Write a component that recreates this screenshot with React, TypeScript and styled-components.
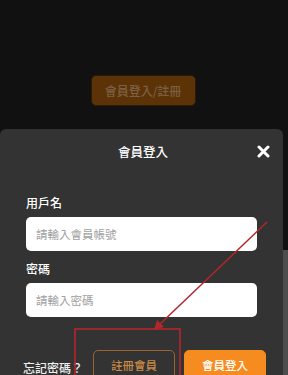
import React from 'react';
import styled, { createGlobalStyle } from 'styled-components';

const GlobalStyle = createGlobalStyle`
  html, body {
    margin: 0;
    padding: 0;
    background: #111111;
    overflow: hidden;
  }
  * {
    box-sizing: border-box;
  }
`;

const colors = {
  page: '#111111',
  modal: '#333333',
  orange: '#f68b1f',
  annotation: '#b3262b',
};

const App = () => {
  return (
    <StPage>
      <GlobalStyle />
      <StMain>
        <StBackdrop>
          <StDimButton>會員登入/註冊</StDimButton>
        </StBackdrop>
        <StModal>
          <StModalHeader>
            <StModalTitle>會員登入</StModalTitle>
            <StCloseButton aria-label='close'>
              <svg width='13' height='13' viewBox='0 0 13 13'>
                <path d='M2 2 L11 11 M11 2 L2 11' stroke='#fff' strokeWidth='3' strokeLinecap='round' />
              </svg>
            </StCloseButton>
          </StModalHeader>
          <StField $top={36}>
            <StLabel>用戶名</StLabel>
            <StInput placeholder='請輸入會員帳號' />
          </StField>
          <StField $top={11}>
            <StLabel>密碼</StLabel>
            <StInput type='password' placeholder='請輸入密碼' />
          </StField>
          <StActions>
            <StForgot>忘記密碼？</StForgot>
            <StButton $variant='outline'>註冊會員</StButton>
            <StButton $variant='solid'>會員登入</StButton>
          </StActions>
        </StModal>
      </StMain>
      <StScrollTrack>
        <StScrollThumb />
      </StScrollTrack>
      {/* red annotation drawn over the screenshot */}
      <StAnnotation width='288' height='375' viewBox='0 0 288 375'>
        <rect x='75' y='329' width='105' height='60' fill='none' stroke={colors.annotation} strokeWidth='1.6' />
        <line x1='267' y1='222' x2='158' y2='326' stroke={colors.annotation} strokeWidth='1.5' />
        <polygon points='154,330 157,320 164,327' fill={colors.annotation} />
      </StAnnotation>
    </StPage>
  );
};

const StPage = styled.div`
  position: relative;
  width: 288px;
  height: 375px;
  display: flex;
  overflow: hidden;
  background: ${colors.page};
  font-family: 'Noto Sans CJK TC', 'Noto Sans', sans-serif;
`;

const StMain = styled.div`
  width: 283px;
  display: flex;
  flex-direction: column;
`;

const StBackdrop = styled.div`
  height: 129px;
  flex-shrink: 0;
  display: flex;
  justify-content: center;
  padding: 75px 0 0 3px;
`;

const StDimButton = styled.div`
  width: 105px;
  height: 31px;
  border-radius: 5px;
  background: #5c3306;
  border: 1px solid #2a1a08;
  color: #7d5f45;
  font-size: 12px;
  font-weight: 500;
  display: flex;
  align-items: center;
  justify-content: center;
`;

const StModal = styled.div`
  flex: 1;
  background: ${colors.modal};
  border-radius: 6px 6px 0 0;
  display: flex;
  flex-direction: column;
  padding: 15px 26px 0;
`;

const StModalHeader = styled.div`
  position: relative;
  display: flex;
  justify-content: center;
  align-items: center;
  height: 16px;
`;

const StModalTitle = styled.div`
  color: #ffffff;
  font-size: 12.5px;
  font-weight: 500;
  line-height: 16px;
  padding-left: 3px;
`;

const StCloseButton = styled.div`
  position: absolute;
  right: -13px;
  top: 1px;
  width: 13px;
  height: 13px;
  display: flex;
`;

const StField = styled.div<{ $top: number }>`
  display: flex;
  flex-direction: column;
  margin-top: ${(props) => props.$top}px;
`;

const StLabel = styled.div`
  color: #ffffff;
  font-size: 12px;
  font-weight: 500;
  line-height: 14px;
  margin-bottom: 7px;
`;

const StInput = styled.input`
  width: 231px;
  height: 34px;
  border: none;
  outline: none;
  border-radius: 5px;
  background: #ffffff;
  padding: 0 10px;
  font-family: inherit;
  font-size: 11.5px;
  color: #333;

  &::placeholder {
    color: #a0a0a0;
  }
`;

const StActions = styled.div`
  display: flex;
  align-items: center;
  gap: 9px;
  margin: 33px -9px 0 -3px;
`;

const StForgot = styled.div`
  color: #eeeeee;
  font-size: 12px;
  font-weight: 500;
  margin-right: auto;
  padding-top: 4px;
`;

const StButton = styled.div<{ $variant: 'outline' | 'solid' }>`
  width: 82px;
  height: 30px;
  border-radius: 5px;
  font-size: 11.5px;
  font-weight: 500;
  display: flex;
  align-items: center;
  justify-content: center;
  border: 1px solid ${(props) => (props.$variant === 'solid' ? colors.orange : '#9a6330')};
  background: ${(props) => (props.$variant === 'solid' ? colors.orange : 'transparent')};
  color: ${(props) => (props.$variant === 'solid' ? '#ffffff' : '#c98a45')};
`;

const StScrollTrack = styled.div`
  width: 5px;
  display: flex;
  flex-direction: column;
  padding-top: 250px;
`;

const StScrollThumb = styled.div`
  flex: 1;
  background: #4d4d4d;
`;

const StAnnotation = styled.svg`
  position: absolute;
  left: 0;
  top: 0;
  pointer-events: none;
`;

export default App;
